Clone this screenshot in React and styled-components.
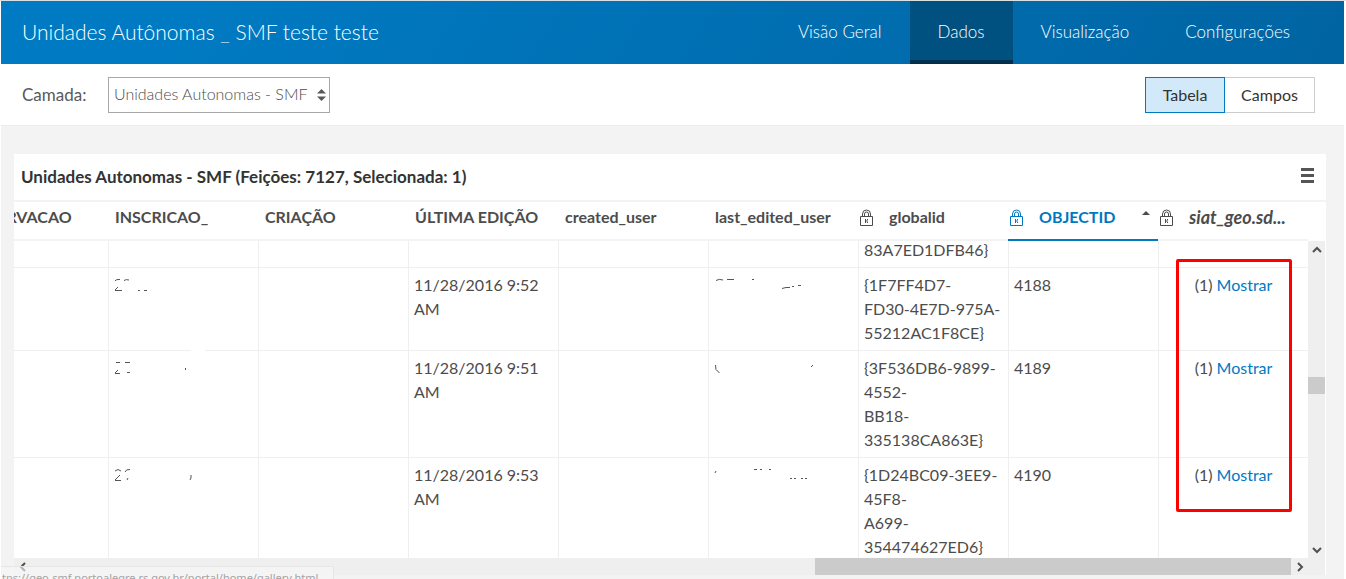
import React, { useLayoutEffect, useRef, useState } from "react";
import styled, { createGlobalStyle } from "styled-components";

const colors = {
  blue: "#0079c1",
  text: "#4c4c4c",
  line: "#efefef",
  pageBg: "#f3f3f3",
  track: "#efefef",
  thumb: "#cbcbcb",
};

const GlobalStyle = createGlobalStyle`
  * {
    box-sizing: border-box;
  }
  body {
    margin: 0;
    background-color: #ffffff;
    color: ${colors.text};
    font-family: Lato, "Open Sans", sans-serif;
    font-size: 16px;
    line-height: 24px;
  }
  button,
  select {
    font: inherit;
    color: inherit;
  }
`;

const Page = styled.div`
  position: relative;
  display: flex;
  flex-direction: column;
  height: 100vh;
  min-height: 400px;
  overflow: hidden;
  padding: 0 2px 0 1px;
  border-top: 1px solid #d9dfe2;
`;

const Header = styled.header`
  display: flex;
  flex-shrink: 0;
  align-items: stretch;
  justify-content: space-between;
  height: 63px;
  padding: 0 26px 0 21px;
  background: linear-gradient(120deg, #007ac2 15%, #0064a2 100%);
  color: #ffffff;

  h1 {
    align-self: center;
    margin: 0;
    padding-bottom: 2px;
    font-size: 21px;
    font-weight: 300;
  }
`;

const Nav = styled.nav`
  display: flex;
  font-size: 17px;
  font-weight: 300;
`;

const NavLink = styled.a`
  display: flex;
  align-items: center;
  padding: 3px 28px 0;
  border-bottom: 4px solid ${({ $active }) => ($active ? "#00304d" : "transparent")};
  background-color: ${({ $active }) => ($active ? "#005080" : "transparent")};
  color: #ffffff;
  text-decoration: none;
`;

const Toolbar = styled.div`
  display: flex;
  flex-shrink: 0;
  align-items: center;
  height: 62px;
  padding: 0 29px 0 21px;
  border-bottom: 1px solid #ececec;

  label {
    width: 86px;
    color: #595959;
    font-size: 17px;
  }
`;

const SelectBox = styled.div`
  position: relative;
  width: 222px;

  select {
    width: 100%;
    height: 36px;
    padding: 0 16px 2px 5px;
    appearance: none;
    border: 1px solid #a8a8a8;
    border-radius: 0;
    background-color: #ffffff;
    color: #4c4c4c;
    font-weight: 300;
  }

  svg {
    position: absolute;
    top: 12px;
    right: 4px;
    pointer-events: none;
  }
`;

const ButtonGroup = styled.div`
  display: flex;
  margin-left: auto;
`;

const ToggleButton = styled.button`
  height: 36px;
  width: ${({ $active }) => ($active ? "80px" : "90px")};
  padding: 0;
  border: 1px solid ${({ $active }) => ($active ? colors.blue : "#cccccc")};
  border-left-width: ${({ $active }) => ($active ? "1px" : "0")};
  background-color: ${({ $active }) => ($active ? "#d2e9f9" : "#ffffff")};
  color: #333333;
  cursor: pointer;
`;

const Content = styled.main`
  display: flex;
  flex: 1;
  min-height: 0;
  padding: 28px 18px 4px 13px;
  background-color: ${colors.pageBg};
`;

const Panel = styled.section`
  display: flex;
  flex: 1;
  flex-direction: column;
  min-width: 0;
  background-color: #ffffff;
`;

const PanelTitle = styled.div`
  display: flex;
  flex-shrink: 0;
  align-items: center;
  justify-content: space-between;
  height: 48px;
  padding: 0 12px 0 7px;
  border-bottom: 2px solid ${colors.pageBg};

  h2 {
    margin: 0;
    color: #333333;
    font-size: 17px;
    font-weight: 700;
  }
`;

const IconButton = styled.button`
  display: flex;
  padding: 0;
  border: 0;
  background: none;
  cursor: pointer;
`;

const GridArea = styled.div`
  position: relative;
  display: flex;
  flex: 1;
  min-height: 0;
  padding-right: 1px;
`;

const Scroller = styled.div`
  flex: 1;
  min-width: 0;
  overflow: hidden;
`;

const Table = styled.table`
  width: 1350px;
  min-width: 100%;
  table-layout: fixed;
  border-spacing: 0;
`;

const HeadCell = styled.th`
  position: sticky;
  top: 0;
  z-index: 1;
  height: 39px;
  padding: 0;
  border-bottom: 2px solid ${({ $sorted }) => ($sorted ? colors.blue : colors.pageBg)};
  background-color: #ffffff;
  color: ${({ $sorted }) => ($sorted ? colors.blue : colors.text)};
  font-size: ${({ $related }) => ($related ? "18px" : "16px")};
  font-style: ${({ $related }) => ($related ? "italic" : "normal")};
  text-align: left;
  vertical-align: top;
`;

const HeadLabel = styled.div`
  display: flex;
  align-items: center;
  gap: 16px;
  padding: ${({ $locked }) => ($locked ? "3px 8px 0 2px" : "3px 0 0 7px")};
  white-space: nowrap;

  .arrow {
    margin: 0 0 8px auto;
  }
`;

const Cell = styled.td`
  padding: 5px;
  border-left: 1px solid ${colors.line};
  border-bottom: 1px solid ${colors.line};
  text-align: ${({ $center }) => ($center ? "center" : "left")};
  vertical-align: top;

  a {
    color: ${colors.blue};
    text-decoration: none;
  }
`;

const Erased = styled.svg`
  display: block;
  width: 140px;
  height: 24px;
  overflow: visible;
  fill: none;
  stroke: #555555;
`;

const VerticalBar = styled.div`
  display: flex;
  flex-direction: column;
  width: 17px;
  margin-top: 39px;
  background-color: ${colors.track};
`;

const HorizontalBar = styled.div`
  display: flex;
  flex-shrink: 0;
  height: 17px;
  margin-right: 1px;
  padding-right: 17px;
  background-color: ${colors.track};
`;

const BarButton = styled.button`
  display: flex;
  flex: 0 0 17px;
  align-items: center;
  justify-content: center;
  padding: 0;
  border: 0;
  background: none;
`;

const Track = styled.div`
  display: flex;
  flex: 1;
  flex-direction: ${({ $vertical }) => ($vertical ? "column" : "row")};
`;

const Space = styled.div`
  flex: ${({ $grow }) => $grow} 1 0;
`;

const Thumb = styled(Space)`
  background-color: ${colors.thumb};
`;

const Highlight = styled.div`
  position: absolute;
  z-index: 2;
  top: 57px;
  right: 34px;
  width: 116px;
  height: 253px;
  border: 3px solid #ff0000;
  border-radius: 2px;
  pointer-events: none;
`;

const StatusBubble = styled.div`
  position: absolute;
  z-index: 3;
  bottom: 0;
  left: 1px;
  width: 333px;
  height: 13px;
  padding: 2px 0 0 1px;
  overflow: hidden;
  border: 1px solid #e6e6e6;
  border-width: 1px 1px 0 0;
  background-color: rgba(246, 246, 246, 0.6);
  color: #a3a3a3;
  font-family: "Noto Sans", "Open Sans", sans-serif;
  font-size: 11px;
  line-height: 18px;
  white-space: nowrap;
`;

function Lock() {
  return (
    <svg width="13" height="17" viewBox="0 0 13 17" fill="none" stroke="currentColor" aria-label="somente leitura">
      <path d="M.5 7.5h12v9H.5z" />
      <path d="M2.5 7V5a4 4 0 0 1 8 0v2M4.5 7V5a2 2 0 0 1 4 0v2" />
      <path d="M5.5 10v4M7.5 10v1.5M7.5 12.5V14M5 12h2" />
    </svg>
  );
}

const chevrons = {
  up: "M1 7 5 3l4 4",
  down: "M1 3l4 4 4-4",
  left: "M7 1 3 5l4 4",
  right: "M3 1l4 4-4 4",
};

function ScrollButton({ direction }) {
  return (
    <BarButton type="button" aria-label={direction}>
      <svg width="10" height="10" viewBox="0 0 10 10" fill="none" stroke="#505050" strokeWidth="2">
        <path d={chevrons[direction]} />
      </svg>
    </BarButton>
  );
}

const columns = [
  { name: "OBSERVACAO" },
  { name: "INSCRICAO_" },
  { name: "CRIAÇÃO" },
  { name: "ÚLTIMA EDIÇÃO" },
  { name: "created_user" },
  { name: "last_edited_user" },
  { name: "globalid", locked: true },
  { name: "OBJECTID", locked: true, sorted: true },
  { name: "siat_geo.sd...", locked: true, related: true },
];

// leftover strokes of the values that were wiped from the table
const rows = [
  { globalid: ["83A7ED1DFB46}"] },
  {
    edited: "11/28/2016 9:52 AM",
    globalid: ["{1F7FF4D7-", "FD30-4E7D-975A-", "55212AC1F8CE}"],
    objectid: "4188",
    code: "M1 8q1-1.5 3-1.5h2M10 7.5q2-1.5 5-.5M1 17.5h7M1 17l3-3M30 17.5h3M24 17.5h2",
    user: "M2 7.5q3-2 7-.5M13 6.5h7M38 6.5h2M68 15.5l4-1h4M78 13.5h2M84 12.5h3",
    wipe: true,
  },
  {
    edited: "11/28/2016 9:51 AM",
    globalid: ["{3F536DB6-9899-", "4552-", "BB18-", "335138CA863E}"],
    objectid: "4189",
    code: "M2 6.5h4M11 6.5h5M1 17.5h5M1 17l3-3M13 16.5h3M71.500 12v2",
    user: "M1.500 9q-1 5 4 8M97 11l2-2",
  },
  {
    edited: "11/28/2016 9:53 AM",
    globalid: ["{1D24BC09-3EE9-", "45F8-", "A699-", "354474627ED6}"],
    objectid: "4190",
    code: "M1 8q3-3 6 0M11 9q1-3 5-2.500M1 17.5h6M1 17l5-5M13 17l1-2M77 12v3l-1 2",
    user: "M1 10l1-2M40 6.500h3M46 6.500h2M55 6.500h2M76 15.500h2M80 15.500h2M87 15.500h2M91 15.500h2",
  },
];

function DataTable() {
  const scroller = useRef(null);

  // open at the last column, part way through the first visible row
  useLayoutEffect(() => {
    scroller.current.scrollLeft = scroller.current.scrollWidth;
    scroller.current.scrollTop = 8;
  }, []);

  return (
    <Scroller ref={scroller}>
      <Table>
        <thead>
          <tr>
            {columns.map(({ name, locked, sorted, related }) => (
              <HeadCell key={name} scope="col" $sorted={sorted} $related={related}>
                <HeadLabel $locked={locked}>
                  {locked && <Lock />}
                  {name}
                  {sorted && (
                    <svg className="arrow" width="8" height="4" viewBox="0 0 8 4" fill="#4c4c4c">
                      <path d="M0 4 4 0l4 4z" />
                    </svg>
                  )}
                </HeadLabel>
              </HeadCell>
            ))}
          </tr>
        </thead>
        <tbody>
          {rows.map((row) => (
            <tr key={row.globalid[0]}>
              <Cell />
              <Cell>
                {row.code && (
                  <Erased aria-hidden="true">
                    <path d={row.code} />
                    {row.wipe && <rect x="77" y="76" width="14" height="3" fill="#ffffff" stroke="none" />}
                  </Erased>
                )}
              </Cell>
              <Cell />
              <Cell>{row.edited}</Cell>
              <Cell />
              <Cell>
                {row.user && (
                  <Erased aria-hidden="true">
                    <path d={row.user} />
                  </Erased>
                )}
              </Cell>
              <Cell>
                {row.globalid.map((part) => (
                  <div key={part}>{part}</div>
                ))}
              </Cell>
              <Cell>{row.objectid}</Cell>
              <Cell $center>
                {row.objectid && (
                  <>
                    (1) <a href="#related">Mostrar</a>
                  </>
                )}
              </Cell>
            </tr>
          ))}
        </tbody>
      </Table>
    </Scroller>
  );
}

export default function App() {
  const [view, setView] = useState("Tabela");

  return (
    <Page>
      <GlobalStyle />
      <Header>
        <h1>Unidades Autônomas _ SMF teste teste</h1>
        <Nav>
          {["Visão Geral", "Dados", "Visualização", "Configurações"].map((item) => (
            <NavLink key={item} href="#tab" $active={item === "Dados"}>
              {item}
            </NavLink>
          ))}
        </Nav>
      </Header>
      <Toolbar>
        <label htmlFor="layer">Camada:</label>
        <SelectBox>
          <select id="layer">
            <option>Unidades Autonomas - SMF</option>
          </select>
          <svg width="9" height="12" viewBox="0 0 9 12" fill="#595959">
            <path d="M0 4.500 4.500 0 9 4.500zM0 7.500h9L4.500 12z" />
          </svg>
        </SelectBox>
        <ButtonGroup>
          {["Tabela", "Campos"].map((item) => (
            <ToggleButton
              key={item}
              type="button"
              aria-pressed={view === item}
              $active={view === item}
              onClick={() => setView(item)}
            >
              {item}
            </ToggleButton>
          ))}
        </ButtonGroup>
      </Toolbar>
      <Content>
        <Panel>
          <PanelTitle>
            <h2>Unidades Autonomas - SMF (Feições: 7127, Selecionada: 1)</h2>
            <IconButton type="button" aria-label="Opções da tabela">
              <svg width="13" height="20" viewBox="0 0 13 20" fill="#555555">
                <path d="M0 1h13v3H0zM0 7h13v3H0zM0 13h13v3H0z" />
              </svg>
            </IconButton>
          </PanelTitle>
          <GridArea>
            <DataTable />
            <VerticalBar>
              <ScrollButton direction="up" />
              <Track $vertical>
                <Space $grow={119} />
                <Thumb $grow={17} />
                <Space $grow={147} />
              </Track>
              <ScrollButton direction="down" />
            </VerticalBar>
            <Highlight />
          </GridArea>
          <HorizontalBar>
            <ScrollButton direction="left" />
            <Track>
              <Space $grow={784} />
              <Thumb $grow={476} />
            </Track>
            <ScrollButton direction="right" />
          </HorizontalBar>
        </Panel>
      </Content>
      <StatusBubble>tps://geo-smf.portoalegre.rs.gov.br/portal/home/gallery.html</StatusBubble>
    </Page>
  );
}
